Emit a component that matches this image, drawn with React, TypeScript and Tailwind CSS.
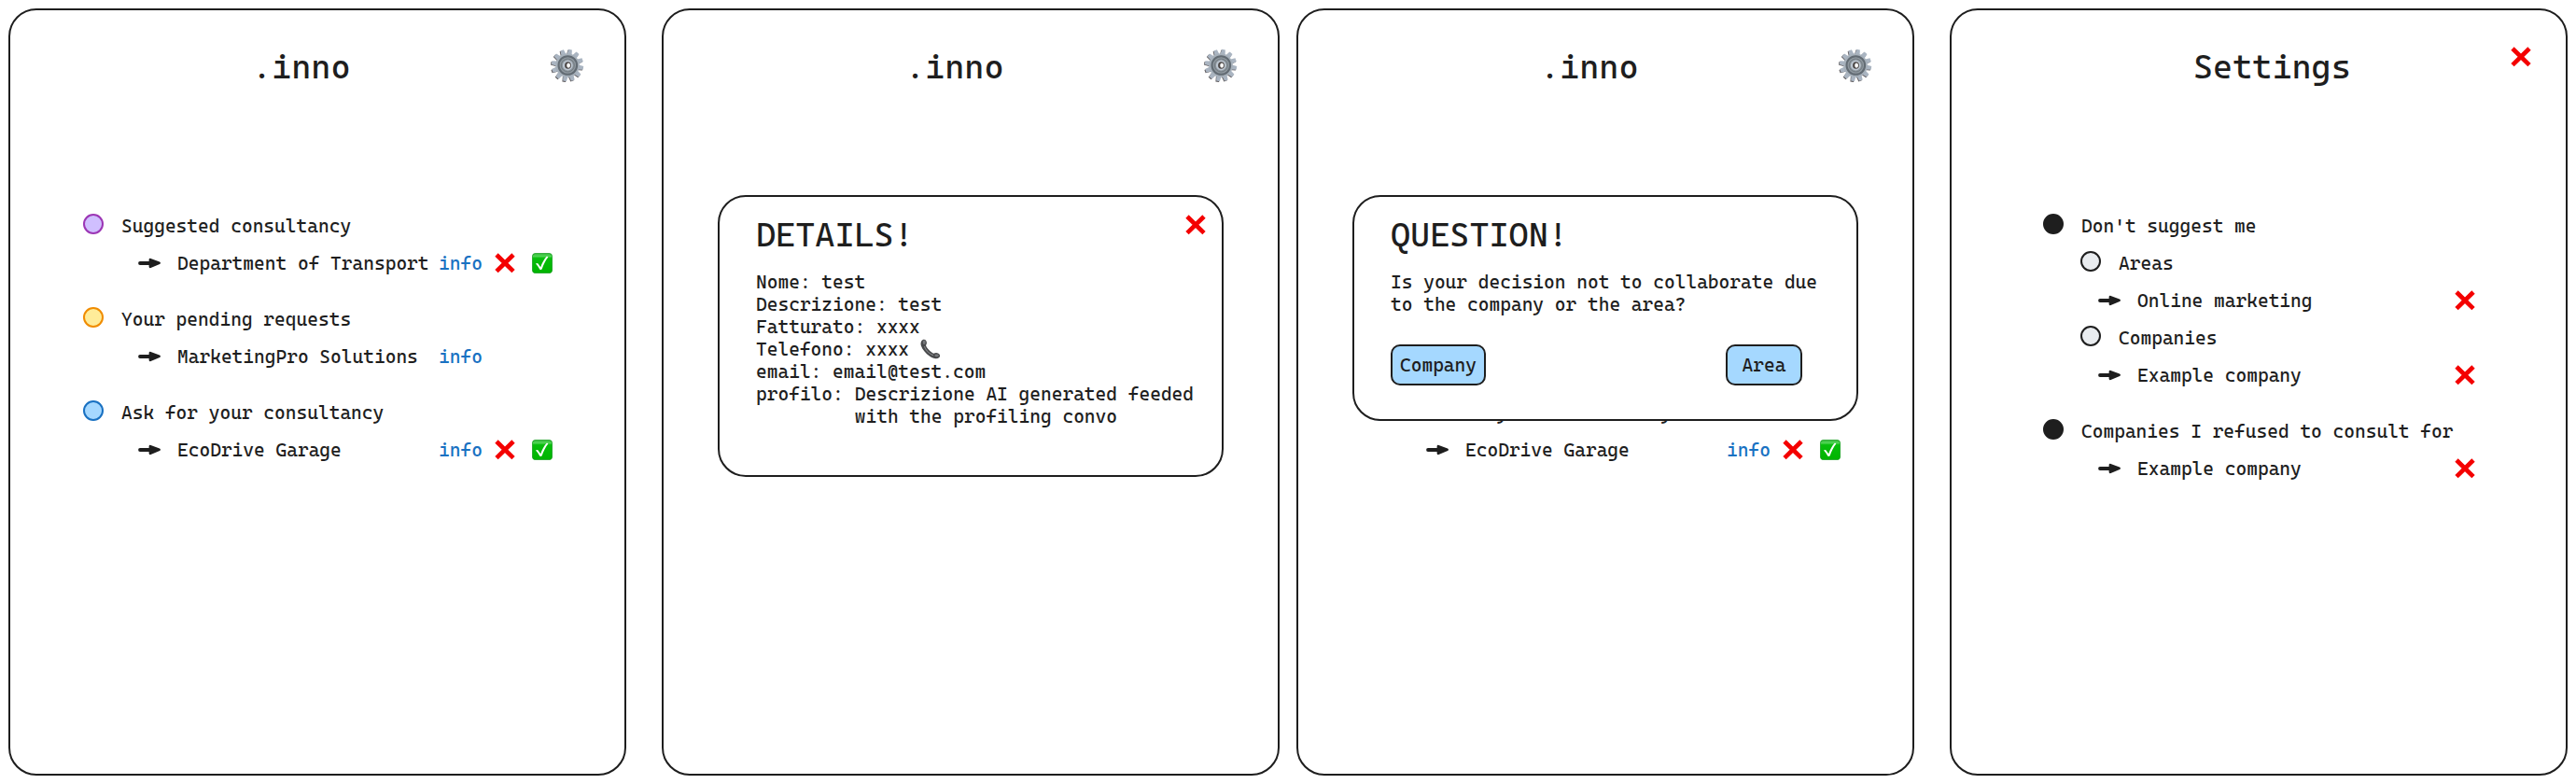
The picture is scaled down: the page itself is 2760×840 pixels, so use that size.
import type { ReactNode } from "react";

type Tone = "purple" | "yellow" | "blue" | "black" | "gray";

const dotTones: Record<Tone, string> = {
  purple: "border-[#9c36b5] bg-[#d0bfff]",
  yellow: "border-[#f08c00] bg-[#ffec99]",
  blue: "border-[#1971c2] bg-[#a5d8ff]",
  black: "border-[#1e1e1e] bg-[#1e1e1e]",
  gray: "border-[#1e1e1e] bg-[#e9ecef]",
};

function CrossIcon() {
  return (
    <svg viewBox="0 0 22 22" className="size-[22px]" aria-hidden="true">
      <path d="M2 2 20 19.6M20 2 2 19.6" stroke="#f40000" strokeWidth="4.8" fill="none" />
    </svg>
  );
}

function CheckIcon() {
  return (
    <svg viewBox="0 0 22 22" className="size-[22px]" aria-hidden="true">
      <defs>
        <linearGradient id="check-fill" x1="0" y1="0" x2="0" y2="1">
          <stop offset="0" stopColor="#35b83a" />
          <stop offset="0.15" stopColor="#4fd453" />
          <stop offset="0.25" stopColor="#07bd0b" />
          <stop offset="1" stopColor="#00b400" />
        </linearGradient>
      </defs>
      <rect x="0.4" y="0.4" width="21.2" height="21.2" rx="3.4" fill="url(#check-fill)" stroke="#119a1a" strokeWidth="0.8" />
      <path
        d="M4 11.6c.8-.9 2-.9 2.6 0l2.6 3.7C10.7 10.8 12.8 7 15.2 4.2c.6-.6 1.9-.5 2.1.2C14.5 8 12.3 12.5 10.7 17.3c-.4 1-2 1-2.5.1C7 15.3 5.6 13.3 4 11.6Z"
        fill="#fff"
      />
    </svg>
  );
}

function ArrowIcon() {
  return (
    <svg viewBox="0 0 24 12" className="h-3 w-6 shrink-0" aria-hidden="true">
      <path d="M2 6h12" stroke="#1e1e1e" strokeWidth="3.8" strokeLinecap="round" />
      <path d="M13 2.2 22.5 5.8 13 9.8Z" fill="#1e1e1e" stroke="#1e1e1e" strokeWidth="2.8" strokeLinejoin="round" />
    </svg>
  );
}

function PhoneIcon() {
  return (
    <svg viewBox="0 0 22 22" className="inline-block size-[22px] align-[-4px]" aria-hidden="true">
      <path
        d="M1.2 2.6C2.5.4 5 .2 6.2 2c1 1.6 1 3.6-.2 5 .8 3 5.4 7.6 8.5 8.8 1.2-.9 3.4-1.1 5-.1 2 1.1 2.2 3.2.5 4.6-2.4 1.7-6.5.9-9.8-1.5C5.6 15.6 2.2 11.4.9 7.6.4 5.9.4 4 1.2 2.6Z"
        fill="#48494b"
      />
      <path d="M4.6 8.6c1.7 4.2 5 7.2 8.9 9" stroke="#85878a" strokeWidth="1.1" fill="none" strokeLinecap="round" />
      <ellipse cx="4.2" cy="3.8" rx="1.5" ry="2.2" fill="#77797c" />
      <ellipse cx="17.6" cy="17.8" rx="2.2" ry="1.4" fill="#77797c" />
    </svg>
  );
}

const teeth = Array.from({ length: 12 }, (_, i) => i * 30 + 10);

function GearIcon() {
  return (
    <svg viewBox="0 0 36 36" className="size-9" aria-hidden="true">
      <g fill="#5e5a5c" transform="translate(-0.8 0.8)">
        {teeth.map((a) => (
          <path key={a} d="M15.6 7 16.2.8h3.6L20.4 7Z" transform={`rotate(${a} 18 18)`} />
        ))}
      </g>
      <g fill="#aab5c2">
        {teeth.map((a) => (
          <path key={a} d="M15.3 7 16.1.8h3.8L20.7 7Z" transform={`rotate(${a} 18 18)`} />
        ))}
      </g>
      <circle cx="18" cy="18" r="12.8" fill="#a6b0ba" />
      <circle cx="18.3" cy="18" r="9.8" fill="#8f989f" stroke="#626b73" strokeWidth="2" />
      <circle cx="18.3" cy="18" r="7" fill="#8b949b" stroke="#727b82" strokeWidth="1" />
      <circle cx="18.3" cy="18" r="5.4" fill="#bcc6d1" />
      <ellipse cx="18.5" cy="18" rx="3.4" ry="3.8" fill="#4b4645" />
      <ellipse cx="19.1" cy="18.1" rx="1.9" ry="2.6" fill="#fff" />
    </svg>
  );
}

function IconButton({ label, children }: { label: string; children: ReactNode }) {
  return (
    <button type="button" aria-label={label} className="block cursor-pointer">
      {children}
    </button>
  );
}

function Screen({ children }: { children: ReactNode }) {
  return (
    <section className="relative min-w-0 flex-1 rounded-[30px] border-2 border-[#1e1e1e] bg-white">
      {children}
    </section>
  );
}

function Header({ title, action }: { title: string; action: ReactNode }) {
  return (
    <header className="flex h-[120px] items-start justify-between pt-[39px]">
      <h1 className="pl-[259px] text-[36px] leading-11">{title}</h1>
      {action}
    </header>
  );
}

function HomeHeader() {
  return (
    <Header
      title=".inno"
      action={
        <div className="pt-[2px] pr-[43px]">
          <IconButton label="Open settings">
            <GearIcon />
          </IconButton>
        </div>
      }
    />
  );
}

function Heading({ tone, children, nested = false }: { tone: Tone; children: ReactNode; nested?: boolean }) {
  return (
    <div className={`flex h-10 items-center gap-[19px] ${nested ? "pl-10" : ""}`}>
      <span className={`mb-1 size-[22px] shrink-0 rounded-full border-2 ${dotTones[tone]}`} />
      <h2>{children}</h2>
    </div>
  );
}

function Entry({ name, children }: { name: string; children: ReactNode }) {
  return (
    <li className="flex h-10 items-center gap-[18px] pl-[59px]">
      <ArrowIcon />
      <span className="whitespace-nowrap">{name}</span>
      {children}
    </li>
  );
}

function Group({ tone, title, name, decide = true }: { tone: Tone; title: string; name: string; decide?: boolean }) {
  return (
    <section>
      <Heading tone={tone}>{title}</Heading>
      <ul>
        <Entry name={name}>
          <div className="-ml-2 grid flex-1 shrink-0 grid-cols-[60px_40px_22px] items-center justify-end">
            <a href="#info" className="text-[#1971c2]">
              info
            </a>
            {decide && (
              <>
                <IconButton label={`Refuse ${name}`}>
                  <CrossIcon />
                </IconButton>
                <IconButton label={`Accept ${name}`}>
                  <CheckIcon />
                </IconButton>
              </>
            )}
          </div>
        </Entry>
      </ul>
    </section>
  );
}

function RemovableEntry({ name }: { name: string }) {
  return (
    <ul>
      <Entry name={name}>
        <div className="ml-auto">
          <IconButton label={`Remove ${name}`}>
            <CrossIcon />
          </IconButton>
        </div>
      </Entry>
    </ul>
  );
}

function Dialog({ title, children, action }: { title: string; children: ReactNode; action?: ReactNode }) {
  return (
    <div
      role="dialog"
      aria-label={title}
      className="absolute inset-x-[58px] top-[198px] rounded-[30px] border-2 border-[#1e1e1e] bg-white pt-[19px] pl-[39px]"
    >
      <div className="flex items-start justify-between pr-[17px]">
        <h2 className="text-[36px] leading-11">{title}</h2>
        {action}
      </div>
      {children}
    </div>
  );
}

function ChoiceButton({ children, className }: { children: ReactNode; className: string }) {
  return (
    <button
      type="button"
      className={`h-11 cursor-pointer rounded-[10px] border-2 border-[#1e1e1e] bg-[#a5d8ff] ${className}`}
    >
      {children}
    </button>
  );
}

export default function App() {
  return (
    <main className="flex min-h-screen gap-[18px] bg-white p-[9px] font-['Cascadia_Code','DejaVu_Sans_Mono',monospace] text-[20px] leading-6 font-medium text-[#1e1e1e] antialiased">
      <div className="flex min-w-0 flex-1 gap-[38px]">
        <Screen>
          <HomeHeader />
          <div className="flex flex-col gap-5 pt-[91px] pr-[77px] pl-[78px]">
            <Group tone="purple" title="Suggested consultancy" name="Department of Transport" />
            <Group tone="yellow" title="Your pending requests" name="MarketingPro Solutions" decide={false} />
            <Group tone="blue" title="Ask for your consultancy" name="EcoDrive Garage" />
          </div>
        </Screen>

        <Screen>
          <HomeHeader />
          <Dialog
            title="DETAILS!"
            action={
              <IconButton label="Close details">
                <CrossIcon />
              </IconButton>
            }
          >
            <div className="mt-4 pb-[51px] whitespace-nowrap">
              <p>Nome: test</p>
              <p>Descrizione: test</p>
              <p>Fatturato: xxxx</p>
              <p className="h-6">
                Telefono: xxxx <PhoneIcon />
              </p>
              <p>email: email@test.com</p>
              <div className="flex gap-3">
                <span>profilo:</span>
                <p>
                  Descrizione AI generated feeded
                  <br />
                  with the profiling convo
                </p>
              </div>
            </div>
          </Dialog>
        </Screen>
      </div>

      <div className="flex min-w-0 flex-1 gap-[38px]">
        <Screen>
          <HomeHeader />
          <div className="pt-[291px] pr-[77px] pl-[78px]">
            <Group tone="blue" title="Ask for your consultancy" name="EcoDrive Garage" />
          </div>
          <Dialog title="QUESTION!">
            <p className="mt-4 whitespace-nowrap">
              Is your decision not to collaborate due
              <br />
              to the company or the area?
            </p>
            <div className="mt-[31px] flex justify-between pr-[58px] pb-9">
              <ChoiceButton className="w-[102px]">Company</ChoiceButton>
              <ChoiceButton className="w-[82px]">Area</ChoiceButton>
            </div>
          </Dialog>
        </Screen>

        <Screen>
          <Header
            title="Settings"
            action={
              <div className="pr-[37px]">
                <IconButton label="Close settings">
                  <CrossIcon />
                </IconButton>
              </div>
            }
          />
          <div className="flex flex-col gap-5 pt-[91px] pr-[97px] pl-[98px]">
            <section>
              <Heading tone="black">Don't suggest me</Heading>
              <Heading tone="gray" nested>
                Areas
              </Heading>
              <RemovableEntry name="Online marketing" />
              <Heading tone="gray" nested>
                Companies
              </Heading>
              <RemovableEntry name="Example company" />
            </section>
            <section>
              <Heading tone="black">Companies I refused to consult for</Heading>
              <RemovableEntry name="Example company" />
            </section>
          </div>
        </Screen>
      </div>
    </main>
  );
}
